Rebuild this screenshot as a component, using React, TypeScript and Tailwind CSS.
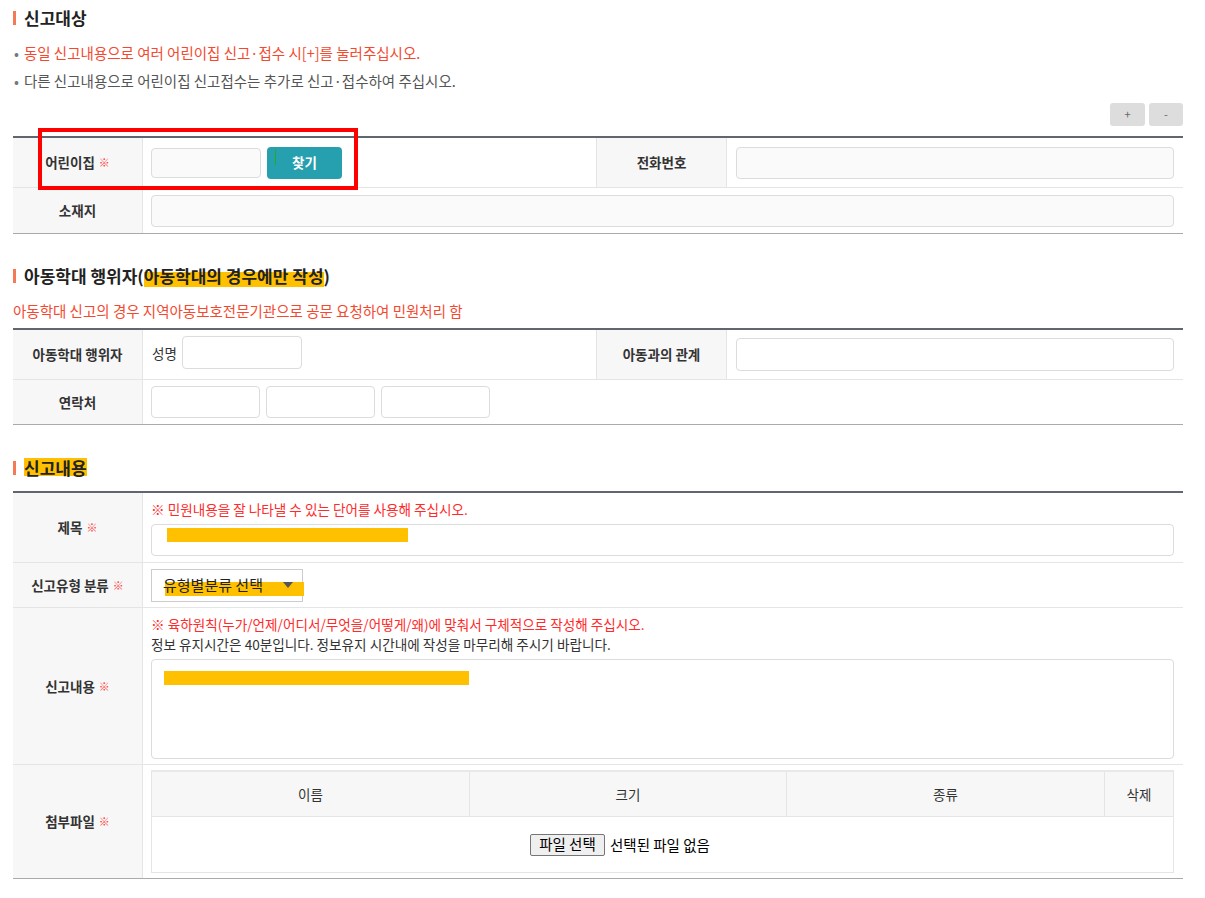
import React from "react";

const font = "font-['Noto_Sans_CJK_KR','Noto_Sans',sans-serif]";

function SectionTitle({ children }: { children: React.ReactNode }) {
  return (
    <div className="flex items-center h-[24px]">
      <span className="w-[3px] h-[14px] bg-[#f47a55] mr-[8px]" />
      <h2 className="text-[17px] font-semibold text-[#222]">{children}</h2>
    </div>
  );
}

function Star() {
  return <span className="text-[#ff3b3b] text-[11px] ml-[4px] font-normal">※</span>;
}

function LabelCell({ children, required = false }: { children: React.ReactNode; required?: boolean }) {
  return (
    <div className="w-[130px] shrink-0 bg-[#f7f7f7] border-r border-[#e5e5e5] flex items-center justify-center text-[13.5px] font-bold text-[#333]">
      {children}
      {required && <Star />}
    </div>
  );
}

function Highlight({ className }: { className: string }) {
  return <span className={"absolute bg-[#ffc000] " + className} />;
}

export default function App() {
  return (
    <div className={`${font} bg-white min-h-[898px] text-[#333]`}>
      <div className="relative ml-[13px] w-[1170px] pt-[6px] pb-[20px]">
        {/* 신고대상 */}
        <SectionTitle>신고대상</SectionTitle>
        <ul className="mt-[9px] text-[14.5px]">
          <li className="h-[28px] flex items-center text-[#f5492f]">
            <span className="text-[#777] ml-[1px] mr-[5px]">•</span>
            동일 신고내용으로 여러 어린이집 신고·접수 시[+]를 눌러주십시오.
          </li>
          <li className="h-[28px] flex items-center text-[#555]">
            <span className="text-[#777] ml-[1px] mr-[5px]">•</span>
            다른 신고내용으로 어린이집 신고접수는 추가로 신고·접수하여 주십시오.
          </li>
        </ul>
        <div className="flex justify-end gap-[4px] mt-[8px]">
          <button className="w-[35px] h-[23px] rounded-[3px] bg-[#dddddd] text-[#666] text-[11px]">+</button>
          <button className="w-[34px] h-[23px] rounded-[3px] bg-[#dddddd] text-[#666] text-[11px]">-</button>
        </div>

        <div className="mt-[10px] border-t-2 border-[#5f6670] border-b border-b-[#aaaaaa]">
          <div className="flex h-[50px] border-b border-[#e5e5e5]">
            <LabelCell required>어린이집</LabelCell>
            <div className="w-[454px] border-r border-[#e5e5e5] flex items-center pl-[8px] gap-[6px]">
              <input className="w-[110px] h-[30px] rounded-[4px] border border-[#dcdcdc] bg-[#fafafa]" />
              <button className="relative w-[75px] h-[32px] rounded-[4px] bg-[#26a0ae] text-white text-[13.5px] font-bold">
                <span className="absolute left-[8px] top-[3px] w-[1px] h-[15px] bg-[#22aa22]" />
                찾기
              </button>
            </div>
            <LabelCell>전화번호</LabelCell>
            <div className="flex-1 flex items-center pl-[9px] pr-[9px]">
              <input className="w-full h-[32px] rounded-[4px] border border-[#dcdcdc] bg-[#fafafa]" />
            </div>
          </div>
          <div className="flex h-[45px]">
            <LabelCell>소재지</LabelCell>
            <div className="flex-1 flex items-center pl-[8px] pr-[9px]">
              <input className="w-full h-[32px] rounded-[4px] border border-[#dcdcdc] bg-[#fafafa]" />
            </div>
          </div>
        </div>

        {/* red annotation box */}
        <div className="absolute left-[25px] top-[128px] w-[320px] h-[62px] border-[4px] border-[#ff0000]" />

        {/* 아동학대 행위자 */}
        <div className="mt-[30px]">
          <SectionTitle>
            아동학대 행위자(
            <span className="relative">
              <Highlight className="left-0 right-0 top-[9px] bottom-[1px]" />
              <span className="relative">아동학대의 경우에만 작성</span>
            </span>
            )
          </SectionTitle>
        </div>
        <p className="mt-[11px] h-[24px] flex items-center text-[14.5px] text-[#f5492f]">
          아동학대 신고의 경우 지역아동보호전문기관으로 공문 요청하여 민원처리 함
        </p>
        <div className="mt-[5px] border-t-2 border-[#5f6670] border-b border-b-[#aaaaaa]">
          <div className="flex h-[50px] border-b border-[#e5e5e5]">
            <LabelCell>아동학대 행위자</LabelCell>
            <div className="w-[454px] border-r border-[#e5e5e5] flex items-start pt-[6px] pl-[9px]">
              <span className="text-[13.5px] mt-[7px] mr-[5px]">성명</span>
              <input className="w-[120px] h-[33px] rounded-[4px] border border-[#dcdcdc] bg-white" />
            </div>
            <LabelCell>아동과의 관계</LabelCell>
            <div className="flex-1 flex items-center pl-[9px] pr-[9px]">
              <input className="w-full h-[33px] rounded-[4px] border border-[#dcdcdc] bg-white" />
            </div>
          </div>
          <div className="flex h-[44px]">
            <LabelCell>연락처</LabelCell>
            <div className="flex-1 flex items-center pl-[8px] gap-[6px]">
              <input className="w-[109px] h-[32px] rounded-[4px] border border-[#dcdcdc] bg-white" />
              <input className="w-[109px] h-[32px] rounded-[4px] border border-[#dcdcdc] bg-white" />
              <input className="w-[109px] h-[32px] rounded-[4px] border border-[#dcdcdc] bg-white" />
            </div>
          </div>
        </div>

        {/* 신고내용 */}
        <div className="mt-[31px]">
          <SectionTitle>
            <span className="relative">
              <Highlight className="left-0 right-0 top-[3px] bottom-[4px]" />
              <span className="relative">신고내용</span>
            </span>
          </SectionTitle>
        </div>
        <div className="mt-[11px] border-t-2 border-[#5f6670] border-b border-b-[#aaaaaa]">
          <div className="flex h-[70px] border-b border-[#e5e5e5]">
            <LabelCell required>제목</LabelCell>
            <div className="flex-1 pl-[8px] pr-[9px] pt-[6px]">
              <p className="text-[13.6px] text-[#ff2a2a] h-[20px] leading-[20px]">※ 민원내용을 잘 나타낼 수 있는 단어를 사용해 주십시오.</p>
              <div className="relative mt-[5px] h-[32px] rounded-[4px] border border-[#dcdcdc] bg-white">
                <Highlight className="left-[15px] top-[3px] w-[241px] h-[14px]" />
              </div>
            </div>
          </div>
          <div className="flex h-[45px] border-b border-[#e5e5e5]">
            <LabelCell required>신고유형 분류</LabelCell>
            <div className="flex-1 flex items-center pl-[8px]">
              <div className="relative w-[152px] h-[33px] border border-[#cccccc] bg-white flex items-center pl-[11px]">
                <Highlight className="left-[13px] top-[12px] w-[139px] h-[14px]" />
                <span className="relative text-[15px] text-[#222]">유형별분류 선택</span>
                <svg className="relative ml-[20px]" width="10" height="6" viewBox="0 0 10 6">
                  <path d="M0 0 L10 0 L5 6 Z" fill="#555" />
                </svg>
              </div>
            </div>
          </div>
          <div className="flex h-[157px] border-b border-[#e5e5e5]">
            <LabelCell required>신고내용</LabelCell>
            <div className="flex-1 pl-[8px] pr-[9px] pt-[6px]">
              <p className="text-[13.6px] text-[#ff2a2a] h-[20px] leading-[20px]">※ 육하원칙(누가/언제/어디서/무엇을/어떻게/왜)에 맞춰서 구체적으로 작성해 주십시오.</p>
              <p className="text-[13.6px] text-[#333] h-[21px] leading-[21px]">정보 유지시간은 40분입니다. 정보유지 시간내에 작성을 마무리해 주시기 바랍니다.</p>
              <div className="relative mt-[4px] h-[100px] rounded-[4px] border border-[#dcdcdc] bg-white">
                <Highlight className="left-[12px] top-[11px] w-[305px] h-[14px]" />
              </div>
            </div>
          </div>
          <div className="flex h-[113px]">
            <LabelCell required>첨부파일</LabelCell>
            <div className="flex-1 pl-[8px] pr-[9px] pt-[5px]">
              <div className="border-t-2 border-[#e8e8e8] border-b border-b-[#e5e5e5] border-x border-x-[#e5e5e5] text-[13.5px] text-[#333]">
                <div className="flex h-[45px] bg-[#f7f7f7] border-b border-[#e5e5e5]">
                  <div className="w-[318px] border-r border-[#e5e5e5] flex items-center justify-center">이름</div>
                  <div className="w-[317px] border-r border-[#e5e5e5] flex items-center justify-center">크기</div>
                  <div className="w-[318px] border-r border-[#e5e5e5] flex items-center justify-center">종류</div>
                  <div className="flex-1 flex items-center justify-center">삭제</div>
                </div>
                <div className="h-[55px] flex items-center pl-[378px]">
                  <button className="w-[75px] h-[22px] border border-[#767676] rounded-[2px] bg-[#efefef] text-[14.5px] text-black leading-none">파일 선택</button>
                  <span className="ml-[5px] text-[14.5px] text-black">선택된 파일 없음</span>
                </div>
              </div>
            </div>
          </div>
        </div>
      </div>
    </div>
  );
}
